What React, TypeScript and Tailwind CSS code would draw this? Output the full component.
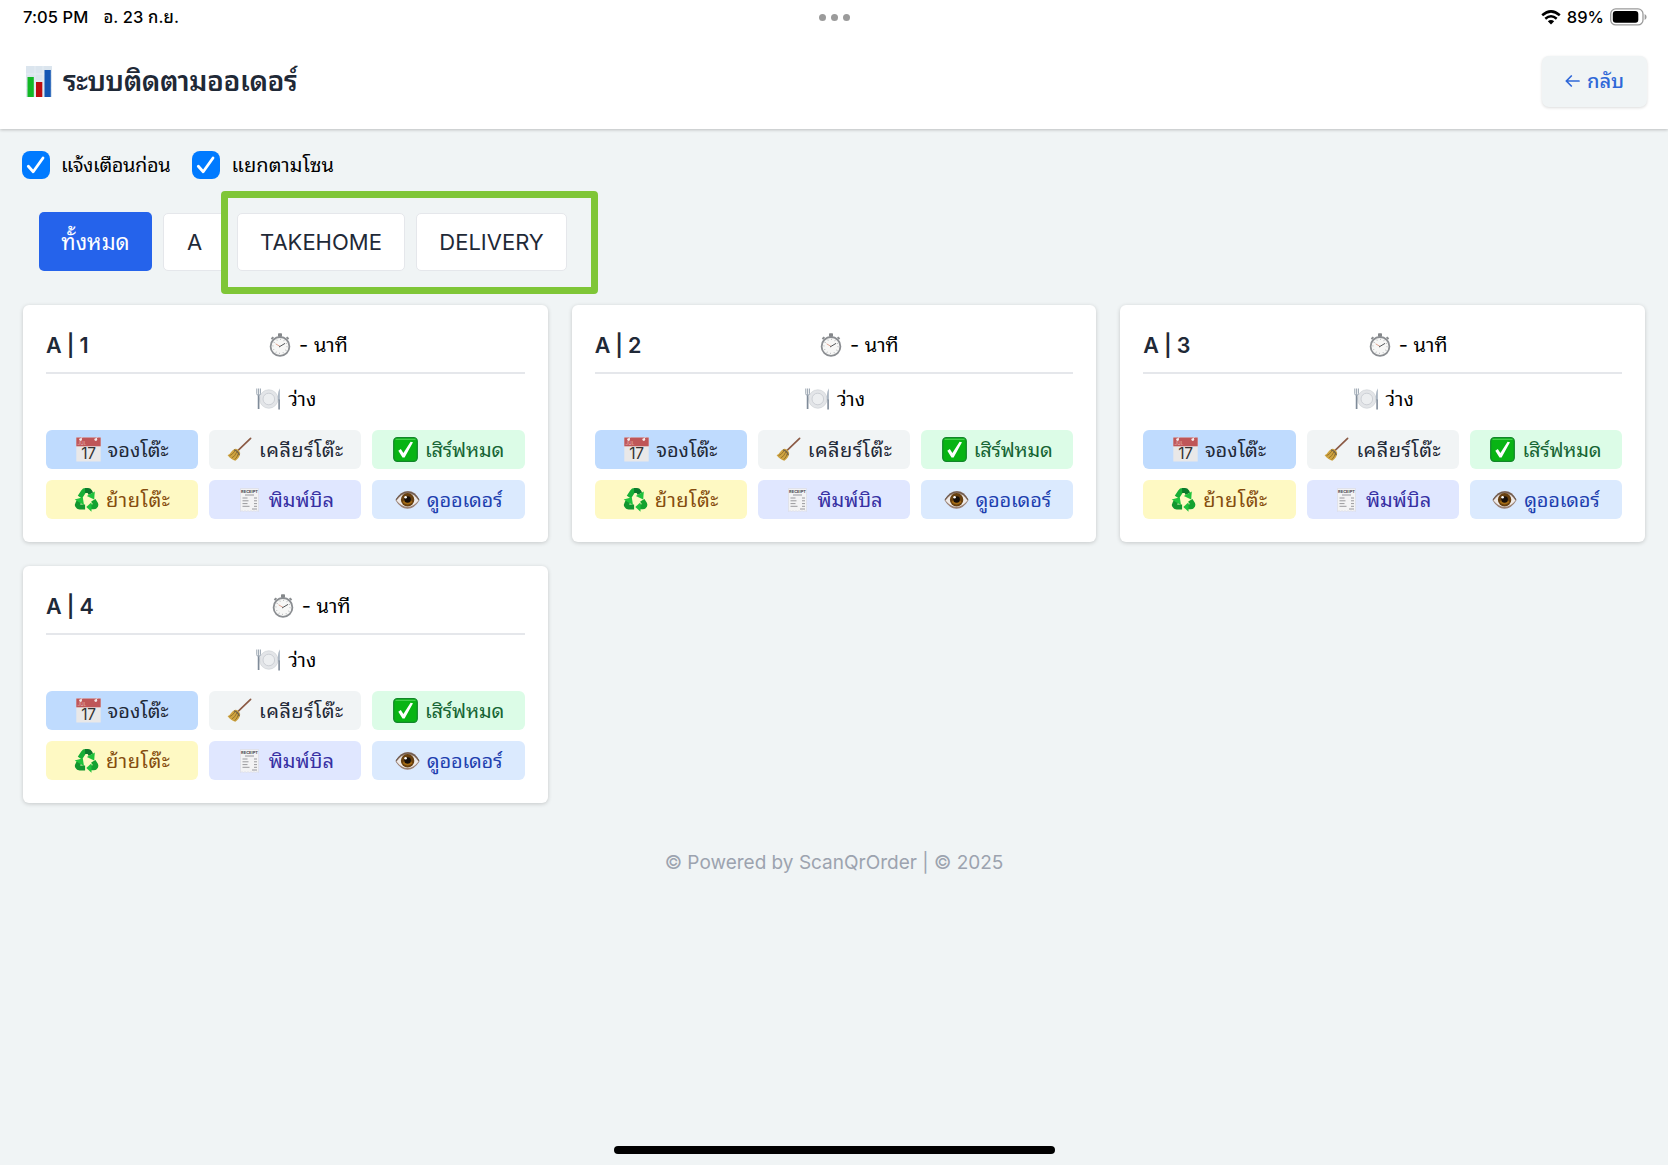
import { ReactNode } from "react"
import clsx from "clsx"

const tables = ["A | 1", "A | 2", "A | 3", "A | 4"]

function ChartIcon() {
  return (
    <svg width="26" height="31" viewBox="0 0 26 31" className="shrink-0">
      <rect width="26" height="31" fill="#dbe5ee" />
      <path d="M0 8h26M0 15h26M0 22h26M9 0v31M17 0v31" stroke="#e6edf3" strokeWidth="1" />
      <rect x="1.5" y="11" width="6.3" height="20" fill="#12b825" />
      <rect x="10" y="16" width="6.3" height="15" fill="#bd0d10" />
      <rect x="18.5" y="4" width="6.3" height="27" fill="#1456b4" />
    </svg>
  )
}

function StopwatchIcon() {
  return (
    <svg width="24" height="24" viewBox="0 0 24 24" className="shrink-0">
      <rect x="10" y="0.3" width="4" height="3.6" rx="0.8" fill="#85888b" />
      <path d="M18.6 4.2l2 1.8M5.4 4.2l-2 1.8" stroke="#8a8d90" strokeWidth="1.8" />
      <circle cx="12" cy="13.4" r="9.4" fill="#f7f7f6" stroke="#8b8e92" strokeWidth="1.8" />
      <circle cx="12" cy="13.4" r="7" fill="none" stroke="#a9abad" strokeWidth="1.3" strokeDasharray="0.7 2.965" />
      <path d="M12 13.4L7.6 10.8" stroke="#d99a86" strokeWidth="0.9" />
      <path d="M11 14l6-3.6" stroke="#55585b" strokeWidth="1" />
    </svg>
  )
}

function PlateIcon() {
  return (
    <svg width="25" height="24" viewBox="0 0 25 24" className="shrink-0">
      <circle cx="12.8" cy="12" r="9.2" fill="#e3e5e8" stroke="#d2d5d9" strokeWidth="0.8" />
      <circle cx="12.8" cy="12" r="5.8" fill="#eceef0" stroke="#c9cdd2" strokeWidth="0.9" />
      <path d="M0.8 1.5v5.2q0 1.7 1.8 1.7t1.8-1.7V1.5M2.6 1.5v7" fill="none" stroke="#8c98a6" strokeWidth="0.9" />
      <path d="M2.6 8.5v13.5" stroke="#7f8b99" strokeWidth="1.7" />
      <path d="M23.9 1.2v12h-2q-.5-8 2-12z" fill="#aab5c2" />
      <path d="M23.1 12.5V22.4" stroke="#7f8b99" strokeWidth="1.6" />
    </svg>
  )
}

function CalendarIcon() {
  return (
    <svg width="25" height="25" viewBox="0 0 25 25" className="shrink-0">
      <rect x="0.3" y="0.5" width="24.4" height="24" fill="#e9e8e8" />
      <rect x="0.3" y="0.5" width="24.4" height="8.8" fill="#bf5658" />
      <circle cx="4.6" cy="2.6" r="1.4" fill="#f5e9ea" />
      <circle cx="19.8" cy="2.6" r="1.4" fill="#f5e9ea" />
      <path d="M4.6 2.6l1.4-2.3M19.8 2.6l1.4-2.3" stroke="#f5e9ea" strokeWidth="0.9" />
      <text x="1.6" y="8.3" fontSize="4.6" fill="#e8b6b6" fontFamily="Inter, sans-serif">JUL</text>
      <text x="12.4" y="22.2" textAnchor="middle" fontSize="15.5" fill="#333" fontFamily="Inter, sans-serif" letterSpacing="-0.5">17</text>
    </svg>
  )
}

function BroomIcon() {
  return (
    <svg width="25" height="25" viewBox="0 0 25 25" className="shrink-0">
      <path d="M23.6 1.4L10.6 13.8" stroke="#8b5a45" strokeWidth="1.7" strokeLinecap="round" />
      <path d="M8.3 11.8q3.6.2 4.9 4.3-.2 4.5-4.8 7.6-4.4-1-7.8-5.4 2.2-.8 3.5-3.2 1.7-2.4 4.2-3.3z" fill="#cfa441" />
      <path d="M2.5 18.7q3-1.2 5.5-4.8M4.8 21q3.4-1.9 5-6M7.7 22.7q2.7-2.4 3.5-6" fill="none" stroke="#8d6a23" strokeWidth="0.8" />
      <path d="M7 12.9q3.9.7 5.3 5.3" fill="none" stroke="#6f6048" strokeWidth="1.3" />
    </svg>
  )
}

function CheckMarkIcon() {
  return (
    <svg width="25" height="25" viewBox="0 0 25 25" className="shrink-0">
      <rect x="0.7" y="0.7" width="23.6" height="23.6" rx="3.6" fill="#08b414" stroke="#12862a" strokeWidth="1.2" />
      <path d="M2.5 2.3h20" stroke="#53d65a" strokeWidth="1" />
      <path d="M5.3 13.8L7.8 12.1l2.6 4 7.2-11.4 2.4.5-8.4 15.3H9.5z" fill="#fff" />
    </svg>
  )
}

function RecycleIcon() {
  return (
    <svg width="25" height="24" viewBox="-0.5 0 25 24" fill="none" className="shrink-0">
      <path d="M5.4 9.2L8.8 3.8q.8-1.200 2.200-1.200h2" stroke="#17ae36" strokeWidth="5" />
      <path d="M10.600 2.600h3q1 0 1.600 1l1.200 2.200" stroke="#0b7a2b" strokeWidth="5" />
      <path d="M20.300 3.400l-.6 8-7.400-3.300z" fill="#1fc23c" />
      <path d="M18.800 12.200l2.300 3.700q.6 1.500-.6 2.500-.4.400-1.200.4h-3" stroke="#14a230" strokeWidth="5" />
      <path d="M17 14.200v9.600l-5.200-4.900z" fill="#1fc23c" />
      <path d="M10.600 18.900H5.100q-1.400 0-2-1.200-.5-1 .1-1.900l1.400-2.500" stroke="#12962f" strokeWidth="5" />
      <path d="M.2 11.400l8.100-2.200 1.200 8z" fill="#1fc23c" />
    </svg>
  )
}

function ReceiptIcon() {
  return (
    <svg width="25" height="24" viewBox="-3 0 25 24" className="shrink-0">
      <path d="M0.5.5h18v23l-1.5-.8-1.5.8-1.5-.8-1.5.8-1.5-.8-1.5.8-1.5-.8-1.5.8-1.5-.8-1.5.8-1.5-.8-1.5.8z" fill="#f3f3f4" stroke="#d7d7dd" strokeWidth="0.5" />
      <text x="9.5" y="5.1" textAnchor="middle" fontSize="4" fontWeight="700" fill="#4b4b4f" fontFamily="Inter, sans-serif">RECEIPT</text>
      <path d="M5 7h9M2.5 10h5M14 10h3M2.5 12.8h6M14 12.8h3M2.5 15.6h5M14 15.6h3M2.5 18.3h7M14 18.3h3M12 21h5" stroke="#8e8e93" strokeWidth="0.9" />
    </svg>
  )
}

function EyeIcon() {
  return (
    <svg width="25" height="20" viewBox="0 0 25 20" className="shrink-0">
      <path d="M.5 10.3Q5.5 1 13 1t11.5 9.3Q19.5 18.7 12.5 18.7T.5 10.3z" fill="#9a8173" />
      <path d="M1.5 10.6Q6.5 3.6 12.8 3.6t10.7 7Q18.5 17 12.5 17t-11-6.4z" fill="#eeeae8" />
      <circle cx="12.6" cy="9.7" r="6.7" fill="#68400f" />
      <path d="M7.7 12.3q4.8 4.6 9.7 0-1.2-3-4.9-3t-4.8 3z" fill="#a56d16" />
      <circle cx="12.6" cy="9.5" r="3.3" fill="#170f09" />
      <circle cx="10.6" cy="7.2" r="1.3" fill="#fff" />
      <path d="M1 9.8Q6 2 12.8 2t11.2 7.8" fill="none" stroke="#6b594e" strokeWidth="1.1" />
    </svg>
  )
}

function WifiIcon() {
  return (
    <svg width="20" height="15" viewBox="0 0 20 15">
      <path d="M1.2 5.3q8.8-7.8 17.6 0M4.3 8.7q5.7-4.9 11.4 0" fill="none" stroke="#000" strokeWidth="2.5" />
      <path d="M6.8 11.2q3.2-2.5 6.4 0L10 14.5z" fill="#000" />
    </svg>
  )
}

function BatteryIcon() {
  return (
    <svg width="37" height="18" viewBox="0 0 37 18">
      <rect x="0.7" y="0.9" width="32.3" height="16" rx="5" fill="none" stroke="#9b9b9b" strokeWidth="1.3" />
      <rect x="2.8" y="3" width="25.5" height="11.8" rx="3" fill="#000" />
      <path d="M34.6 6v6q2-.8 2-3t-2-3z" fill="#9b9b9b" />
    </svg>
  )
}

function CheckOption({ children }: { children: ReactNode }) {
  return (
    <label className="flex items-center gap-[11px]">
      <span className="flex h-7 w-7 items-center justify-center rounded-[8px] bg-[#007aff]">
        <svg width="20" height="20" viewBox="0 0 20 20">
          <path d="M2.3 11.2l4.9 5.5L17 3" fill="none" stroke="#fff" strokeWidth="2.8" strokeLinecap="round" strokeLinejoin="round" />
        </svg>
      </span>
      {children}
    </label>
  )
}

const actions = [
  { label: "จองโต๊ะ", icon: <CalendarIcon />, style: "bg-[#bfdbfe] text-[#1f2937]" },
  { label: "เคลียร์โต๊ะ", icon: <BroomIcon />, style: "bg-[#f1f4f5] text-[#1f2937] tracking-[0.45px]" },
  { label: "เสิร์ฟหมด", icon: <CheckMarkIcon />, style: "bg-[#dcfce7] text-[#166534] tracking-[-0.2px]" },
  { label: "ย้ายโต๊ะ", icon: <RecycleIcon />, style: "bg-[#fef9c3] text-[#854d0e] tracking-[0.5px]" },
  { label: "พิมพ์บิล", icon: <ReceiptIcon />, style: "bg-[#e0e7ff] text-[#3730a3]" },
  { label: "ดูออเดอร์", icon: <EyeIcon />, style: "bg-[#dbeafe] text-[#1e40af] tracking-[-0.2px]" },
]

function TableCard({ name }: { name: string }) {
  return (
    <div className="h-[237px] rounded-[6px] bg-white px-[23px] pt-[23px] shadow-[0_1px_4px_rgba(0,0,0,0.18)]">
      <div className="flex h-[46px] items-center justify-between border-b-2 border-[#e5e7eb] pb-[10px]">
        <h2 className="text-[21.5px] font-semibold tracking-[-0.2px] text-[#1f2937]">{name}</h2>
        <div className="flex items-center gap-[7px] pl-[3px] text-[20px]">
          <StopwatchIcon />
          <span>- นาที</span>
        </div>
        <span />
      </div>
      <div className="flex h-[56px] items-center justify-center gap-[7px] pb-[6px] pl-[2px] text-[20px]">
        <PlateIcon />
        <span>ว่าง</span>
      </div>
      <div className="grid grid-cols-3 gap-[11px]">
        {actions.map(a => (
          <button
            key={a.label}
            className={clsx("flex h-[39px] items-center justify-center gap-[7px] whitespace-nowrap rounded-[6px] text-[20px] leading-none", a.style)}
          >
            {a.icon}
            <span>{a.label}</span>
          </button>
        ))}
      </div>
    </div>
  )
}

export default function App() {
  return (
    <div className="relative flex h-[1165px] w-[1668px] flex-col overflow-hidden bg-[#f0f4f5] font-[Inter,Thonburi,'Noto_Sans_Thai_Looped','Noto_Looped_Thai',Loma,Garuda,Waree,'Noto_Sans_Thai',sans-serif] text-black">
      {/* Status bar + header */}
      <header className="h-[129px] shrink-0 bg-white shadow-[0_1px_3px_rgba(0,0,0,0.22)]">
        <div className="grid h-[33px] grid-cols-3 items-center pl-[23px] pr-[21px] pt-px text-[16.5px] font-medium">
          <div className="flex gap-[15px] tracking-[0.1px]">
            <span>7:05 PM</span>
            <span>อ. 23 ก.ย.</span>
          </div>
          <div className="flex justify-center gap-[5px]">
            <span className="h-[7px] w-[7px] rounded-full bg-[#9b9b9b]" />
            <span className="h-[7px] w-[7px] rounded-full bg-[#9b9b9b]" />
            <span className="h-[7px] w-[7px] rounded-full bg-[#9b9b9b]" />
          </div>
          <div className="flex items-center justify-end gap-[6px]">
            <WifiIcon />
            <span>89%</span>
            <BatteryIcon />
          </div>
        </div>
        <div className="flex h-[96px] items-center justify-between pl-[26px] pr-[21px]">
          <div className="flex items-center gap-[11px]">
            <ChartIcon />
            <h1 className="whitespace-nowrap text-[28px] font-semibold leading-none tracking-[-0.4px] text-[#1f2937]">ระบบติดตามออเดอร์</h1>
          </div>
          <button className="flex h-[51px] w-[105px] items-center justify-center gap-[7px] rounded-[7px] bg-[#f0f4f5] text-[20px] font-medium text-[#2f68d8] shadow-[0_1px_3px_rgba(0,0,0,0.14)]">
            <svg width="15" height="12" viewBox="0 0 15 12">
              <path d="M14 6H1.5M6.3 1L1.3 6l5 5" fill="none" stroke="currentColor" strokeWidth="1.7" strokeLinecap="round" strokeLinejoin="round" />
            </svg>
            <span>กลับ</span>
          </button>
        </div>
      </header>

      {/* Options */}
      <div className="mt-[22px] flex h-7 items-center gap-[22px] pl-[22px] text-[20px]">
        <CheckOption>
          <span className="tracking-[-0.4px]">แจ้งเตือนก่อน</span>
        </CheckOption>
        <CheckOption>
          <span className="tracking-[0.1px]">แยกตามโซน</span>
        </CheckOption>
      </div>

      {/* Zone tabs */}
      <div className="mt-[33px] flex h-[59px] items-center gap-[11px] pl-[39px] text-[22px] text-[#1f2937]">
        <button className="h-[59px] w-[113px] rounded-[5px] bg-[#2563eb] pt-px text-white">ทั้งหมด</button>
        <button className="h-[58px] w-[63px] rounded-[5px] border border-[#e5e7eb] bg-white pt-px">A</button>
        <button className="h-[58px] w-[168px] rounded-[5px] border border-[#e5e7eb] bg-white pt-px">TAKEHOME</button>
        <button className="h-[58px] w-[151px] rounded-[5px] border border-[#e5e7eb] bg-white pt-px">DELIVERY</button>
      </div>
      <div className="absolute left-[221px] top-[191px] h-[103px] w-[377px] rounded-[4px] border-[7.5px] border-[#7fc637]" />

      {/* Tables */}
      <main className="mt-[34px] grid grid-cols-3 gap-[24px] px-[23px]">
        {tables.map(t => (
          <TableCard key={t} name={t} />
        ))}
      </main>

      <footer className="mt-[46px] text-center text-[19px] text-[#9ca3af]">© Powered by ScanQrOrder | © 2025</footer>

      <div className="mx-auto mb-[11px] mt-auto h-[8px] w-[441px] rounded-full bg-black" />
    </div>
  )
}
